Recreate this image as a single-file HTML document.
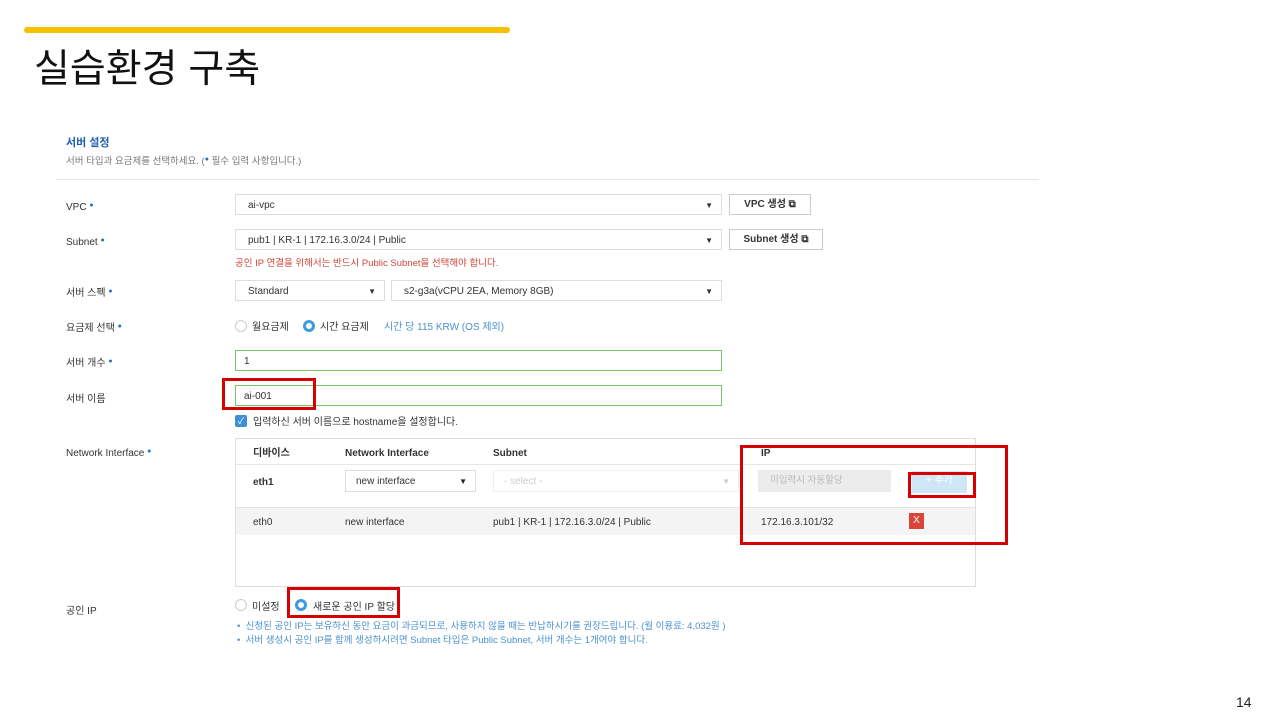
<!DOCTYPE html>
<html><head><meta charset="utf-8"><style>
*{margin:0;padding:0;box-sizing:border-box}
body{width:1280px;height:720px;background:#fff;position:relative;overflow:hidden;font-family:"Liberation Sans","Noto Sans CJK KR",sans-serif;color:#333}
.a{position:absolute;white-space:nowrap;line-height:1.45}
.s{font-size:10px}
.lbl{font-size:10px;color:#333}
.dot{color:#1f6fc5;font-size:7px;vertical-align:top;font-family:"Liberation Sans",sans-serif}
.box{position:absolute;border:1px solid #ddd;background:#fff;font-size:10px;padding-left:12px;line-height:20px}
.tri{position:absolute;right:8px;top:0;font-size:8px}
.red{position:absolute;border:3px solid #d60000}
.btn{position:absolute;border:1px solid #ccc;background:#fff;font-size:10px;font-weight:bold;text-align:center;line-height:20px}
.rad{position:absolute;width:12px;height:12px;border-radius:50%;border:1px solid #ccc;background:#fff}
.rad.on{border:3px solid #3d9be0}
</style></head><body>
<div class="a" style="left:24px;top:27px;width:486px;height:6px;background:#f6c200;border-radius:3px"></div>
<div class="a" style="left:34px;top:42px;font-size:39px;color:#111">실습환경 구축</div>
<div class="a" style="left:66px;top:136px;font-size:11px;font-weight:bold;color:#1f5fae">서버 설정</div>
<div class="a s" style="left:66px;top:155px;color:#777;font-size:9.5px">서버 타입과 요금제를 선택하세요. (<span class="dot">●</span> 필수 입력 사항입니다.)</div>
<div class="a" style="left:56px;top:179px;width:983px;height:1px;background:#e6e6e6"></div>

<div class="a lbl" style="left:66px;top:201px">VPC <span class="dot">●</span></div>
<div class="box" style="left:235px;top:194px;width:487px;height:21px;line-height:21px">ai-vpc<span class="tri">▼</span></div>
<div class="btn" style="left:729px;top:194px;width:82px;height:21px">VPC 생성 ⧉</div>

<div class="a lbl" style="left:66px;top:236px">Subnet <span class="dot">●</span></div>
<div class="box" style="left:235px;top:229px;width:487px;height:21px;line-height:21px">pub1 | KR-1 | 172.16.3.0/24 | Public<span class="tri">▼</span></div>
<div class="btn" style="left:729px;top:229px;width:94px;height:21px">Subnet 생성 ⧉</div>
<div class="a s" style="left:235px;top:257px;color:#d0463a;font-size:9.5px">공인 IP 연결을 위해서는 반드시 Public Subnet을 선택해야 합니다.</div>

<div class="a lbl" style="left:66px;top:287px">서버 스펙 <span class="dot">●</span></div>
<div class="box" style="left:235px;top:280px;width:150px;height:21px;line-height:21px">Standard<span class="tri">▼</span></div>
<div class="box" style="left:391px;top:280px;width:331px;height:21px;line-height:21px">s2-g3a(vCPU 2EA, Memory 8GB)<span class="tri">▼</span></div>

<div class="a lbl" style="left:66px;top:322px">요금제 선택 <span class="dot">●</span></div>
<div class="rad" style="left:235px;top:320px"></div><div class="a s" style="left:252px;top:321px">월요금제</div>
<div class="rad on" style="left:303px;top:320px"></div><div class="a s" style="left:320px;top:321px">시간 요금제</div>
<div class="a s" style="left:384px;top:321px;color:#4a90d0">시간 당 115 KRW (OS 제외)</div>

<div class="a lbl" style="left:66px;top:357px">서버 개수 <span class="dot">●</span></div>
<div class="box" style="left:235px;top:350px;width:487px;height:21px;border-color:#7cc36b;padding-left:8px;line-height:21px">1</div>
<div class="a lbl" style="left:66px;top:393px">서버 이름</div>
<div class="box" style="left:235px;top:385px;width:487px;height:21px;border-color:#7cc36b;padding-left:8px;line-height:21px">ai-001</div>
<div class="red" style="left:222px;top:378px;width:94px;height:32px"></div>
<div class="a" style="left:235px;top:415px;width:12px;height:12px;background:#3d8fd6;border-radius:2px;color:#fff;font-size:9px;text-align:center;line-height:12px">✓</div>
<div class="a s" style="left:253px;top:416px">입력하신 서버 이름으로 hostname을 설정합니다.</div>

<div class="a lbl" style="left:66px;top:447px">Network Interface <span class="dot">●</span></div>
<div class="a" style="left:235px;top:438px;width:741px;height:149px;border:1px solid #ddd"></div>
<div class="a" style="left:236px;top:464px;width:739px;height:1px;background:#e6e6e6"></div>
<div class="a s" style="left:253px;top:447px;font-weight:bold">디바이스</div>
<div class="a s" style="left:345px;top:447px;font-weight:bold">Network Interface</div>
<div class="a s" style="left:493px;top:447px;font-weight:bold">Subnet</div>
<div class="a s" style="left:761px;top:447px;font-weight:bold">IP</div>
<div class="a s" style="left:253px;top:476px;font-weight:bold">eth1</div>
<div class="box" style="left:345px;top:470px;width:131px;height:22px;line-height:21px;padding-left:10px">new interface<span class="tri" style="color:#222">▼</span></div>
<div class="box" style="left:493px;top:470px;width:246px;height:22px;line-height:21px;padding-left:10px;color:#ccc;border-color:#eee">- select -<span class="tri">▼</span></div>
<div class="a" style="left:758px;top:470px;width:133px;height:22px;background:#ececec;color:#bbb;font-size:9.5px;line-height:22px;padding-left:12px">미입력시 자동할당</div>
<div class="a" style="left:912px;top:471px;width:55px;height:22px;background:#cfe6f7;color:#fff;font-size:10px;text-align:center;line-height:20px">+ 추가</div>
<div class="red" style="left:908px;top:472px;width:68px;height:26px"></div>
<div class="a" style="left:236px;top:507px;width:739px;height:28px;background:#f4f4f4;border-top:1px solid #e4e4e4"></div>
<div class="a s" style="left:253px;top:516px">eth0</div>
<div class="a s" style="left:345px;top:516px">new interface</div>
<div class="a s" style="left:493px;top:516px">pub1 | KR-1 | 172.16.3.0/24 | Public</div>
<div class="a s" style="left:761px;top:516px">172.16.3.101/32</div>
<div class="a" style="left:909px;top:513px;width:15px;height:16px;background:#d9453a;color:#fff;font-size:10px;text-align:center;line-height:16px">X</div>
<div class="red" style="left:740px;top:445px;width:268px;height:100px"></div>

<div class="a lbl" style="left:66px;top:605px">공인 IP</div>
<div class="rad" style="left:235px;top:599px"></div><div class="a s" style="left:252px;top:601px">미설정</div>
<div class="rad on" style="left:295px;top:599px"></div><div class="a s" style="left:313px;top:601px">새로운 공인 IP 할당</div>
<div class="red" style="left:287px;top:587px;width:113px;height:31px"></div>
<div class="a" style="left:237px;top:620px;font-size:9.5px;color:#4a90d0">•&nbsp; 신청된 공인 IP는 보유하신 동안 요금이 과금되므로, 사용하지 않을 때는 반납하시기를 권장드립니다. (월 이용료: 4,032원 )</div>
<div class="a" style="left:237px;top:634px;font-size:9.5px;color:#4a90d0">•&nbsp; 서버 생성시 공인 IP를 함께 생성하시려면 Subnet 타입은 Public Subnet, 서버 개수는 1개여야 합니다.</div>
<div class="a" style="left:1236px;top:692px;font-size:14px;color:#222">14</div>
</body></html>
